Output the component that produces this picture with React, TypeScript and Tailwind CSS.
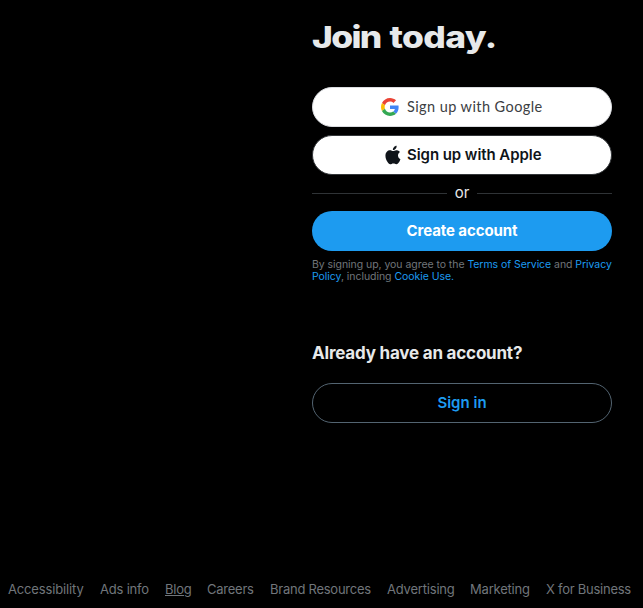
const footerLinks = [
  { label: "Accessibility", style: "w-[76px] tracking-[-0.15px]" },
  { label: "Ads info", style: "w-[49px] tracking-[-0.2px]" },
  { label: "Blog", style: "w-[26px] tracking-[-0.2px] underline" },
  { label: "Careers", style: "w-[47px] tracking-[-0.25px]" },
  { label: "Brand Resources", style: "w-[101px] tracking-[-0.25px]" },
  { label: "Advertising", style: "w-[67px] tracking-[-0.2px]" },
  { label: "Marketing", style: "w-[60px] tracking-[-0.2px]" },
  { label: "X for Business", style: "w-[85px] tracking-[-0.25px]" },
];

function GoogleLogo() {
  return (
    <svg viewBox="0 0 48 48" className="h-[18px] w-[18px] shrink-0" aria-hidden="true">
      <path fill="#EA4335" d="M24 9.5c3.54 0 6.71 1.22 9.21 3.6l6.85-6.85C35.9 2.38 30.47 0 24 0 14.62 0 6.51 5.38 2.56 13.22l7.98 6.19C12.43 13.72 17.74 9.5 24 9.5z" />
      <path fill="#4285F4" d="M46.98 24.55c0-1.57-.15-3.09-.38-4.55H24v9.02h12.94c-.58 2.96-2.26 5.48-4.78 7.18l7.73 6c4.51-4.18 7.09-10.36 7.09-17.65z" />
      <path fill="#FBBC05" d="M10.53 28.59c-.48-1.45-.76-2.99-.76-4.59s.27-3.14.76-4.59l-7.98-6.19C.92 16.46 0 20.12 0 24c0 3.88.92 7.54 2.56 10.78l7.97-6.19z" />
      <path fill="#34A853" d="M24 48c6.48 0 11.93-2.13 15.89-5.81l-7.73-6c-2.15 1.45-4.92 2.3-8.16 2.3-6.26 0-11.57-4.22-13.47-9.91l-7.98 6.19C6.51 42.62 14.62 48 24 48z" />
    </svg>
  );
}

function AppleLogo() {
  return (
    <svg viewBox="0 0 24 24" className="h-5 w-5 shrink-0 fill-[#0f1419]" aria-hidden="true">
      <path d="M16.365 1.43c0 1.14-.493 2.27-1.177 3.08-.744.9-1.99 1.57-2.987 1.57-.12 0-.23-.02-.3-.03-.01-.06-.04-.22-.04-.39 0-1.15.572-2.27 1.206-2.98.804-.94 2.142-1.64 3.248-1.68.03.13.05.28.05.43zm4.565 15.71c-.03.07-.463 1.58-1.518 3.12-.945 1.34-1.94 2.71-3.43 2.71-1.517 0-1.9-.88-3.63-.88-1.698 0-2.302.91-3.67.91-1.377 0-2.332-1.26-3.428-2.8-1.287-1.82-2.323-4.63-2.323-7.28 0-4.28 2.797-6.55 5.552-6.55 1.448 0 2.675.95 3.6.95.865 0 2.222-1.01 3.902-1.01.613 0 2.886.06 4.374 2.19-.13.09-2.383 1.37-2.383 4.19 0 3.26 2.854 4.42 2.955 4.45z" />
    </svg>
  );
}

export default function App() {
  return (
    <div className="flex h-[608px] w-[643px] flex-col overflow-hidden bg-black font-['Inter',sans-serif] whitespace-nowrap text-[#e7e9ea]">
      <main className="ml-[312px] flex h-[577px] w-[300px] flex-col">
        <h1 className="mt-[19px] h-9 origin-left scale-x-[1.18] text-[30px] leading-9 font-extrabold tracking-[-0.55px] [word-spacing:1.4px]">
          <span className="tracking-[-1.4px]">Join</span> <span>today.</span>
        </h1>
        <button className="mt-8 flex h-10 shrink-0 items-center rounded-full border border-[#dadce0] bg-white pl-[68px] font-['Lato',sans-serif] text-[14.5px] text-[#3c4043]">
          <GoogleLogo />
          <span className="ml-2 tracking-[0.42px]">Sign up with Google</span>
        </button>
        <button className="mt-2 flex h-10 shrink-0 items-center rounded-full border border-[#333639] bg-white pl-[70px] text-[15px] font-semibold text-[#0f1419]">
          <AppleLogo />
          <span className="ml-1 tracking-[-0.06px]">Sign up with Apple</span>
        </button>
        <div className="mt-2 flex h-5 shrink-0 items-center">
          <span className="h-px w-[135px] bg-[#2f3336]" />
          <span className="w-[30px] text-center text-[15px] leading-5">or</span>
          <span className="h-px w-[135px] bg-[#2f3336]" />
        </div>
        <button className="mt-2 h-10 shrink-0 rounded-full bg-[#1d9bf0] text-[15px] font-bold tracking-[-0.08px] text-white">Create account</button>
        <p className="mt-2 text-[10.5px] leading-3 tracking-[-0.05px] text-[#71767b]">
          <span className="block">By signing up, you agree to the <a className="text-[#1d9bf0]">Terms of Service</a> and <a className="text-[#1d9bf0]">Privacy</a></span>
          <span className="block"><a className="text-[#1d9bf0]">Policy</a>, including <a className="text-[#1d9bf0]">Cookie Use.</a></span>
        </p>
        <h2 className="mt-[60px] text-[17px] leading-5 font-bold tracking-[-0.2px]">Already have an account?</h2>
        <button className="mt-5 h-10 shrink-0 rounded-full border border-[#536471] text-[15px] font-semibold text-[#1d9bf0]">Sign in</button>
      </main>
      <footer className="flex h-6 gap-4 pl-2 text-[13px] leading-6 text-[#71767b]">
        {footerLinks.map((link) => (
          <a key={link.label} className={link.style}>{link.label}</a>
        ))}
      </footer>
    </div>
  );
}
